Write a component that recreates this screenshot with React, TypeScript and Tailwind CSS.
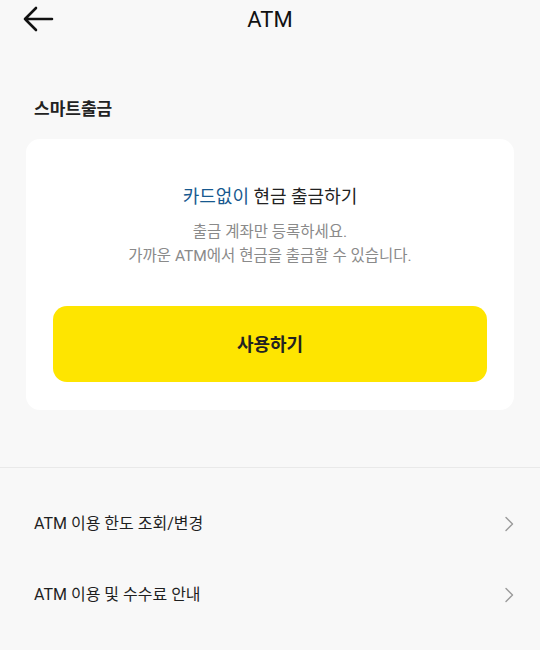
const font = { fontFamily: 'Roboto, "Noto Sans CJK KR", sans-serif' };

function BackArrow() {
  return (
    <svg width="32" height="28" viewBox="0 0 32 28" fill="none" className="text-[#111]">
      <path d="M3 14H30M14 3L3 14L14 25" stroke="currentColor" strokeWidth="2.6" strokeLinecap="round" strokeLinejoin="round" />
    </svg>
  );
}

function Chevron() {
  return (
    <svg width="10" height="16" viewBox="0 0 10 16" fill="none" className="text-[#9a9a9a]">
      <path d="M2 1.5L8.5 8L2 14.5" stroke="currentColor" strokeWidth="1.4" strokeLinecap="round" strokeLinejoin="round" />
    </svg>
  );
}

function MenuRow({ label }: { label: string }) {
  return (
    <button className="flex h-[71px] w-full items-center justify-between pl-[34px] pr-[26px] text-left">
      <span className="text-[16px] text-[#1f1f1f]">{label}</span>
      <Chevron />
    </button>
  );
}

export default function App() {
  return (
    <div className="min-h-[650px] w-full bg-[#f8f8f8]" style={font}>
      <header className="relative flex h-[38px] items-center justify-center">
        <button className="absolute left-[22px] top-[5px]">
          <BackArrow />
        </button>
        <h1 className="text-[22px] text-[#111]">ATM</h1>
      </header>

      <section className="px-[26px] pt-[58px]">
        <h2 className="pl-[8px] text-[17px] font-bold leading-[26px] text-[#222]">스마트출금</h2>
        <div className="mt-[17px] rounded-[14px] bg-white px-[27px] pt-[46px] pb-[28px] text-center">
          <p className="text-[18px] leading-[24px] text-[#222]">
            <span className="text-[#17598f]">카드없이</span> 현금 출금하기
          </p>
          <p className="mt-[11px] text-[15.5px] leading-[24px] text-[#8a8a8a]">
            출금 계좌만 등록하세요.
            <br />
            가까운 ATM에서 현금을 출금할 수 있습니다.
          </p>
          <button className="mt-[38px] flex h-[76px] w-full items-center justify-center rounded-[14px] bg-[#fee500] text-[18px] font-bold text-[#222]">
            사용하기
          </button>
        </div>
      </section>

      <div className="mt-[57px] h-px bg-[#e9e9e9]" />

      <div className="pt-[20px]">
        <MenuRow label="ATM 이용 한도 조회/변경" />
        <MenuRow label="ATM 이용 및 수수료 안내" />
      </div>
    </div>
  );
}
